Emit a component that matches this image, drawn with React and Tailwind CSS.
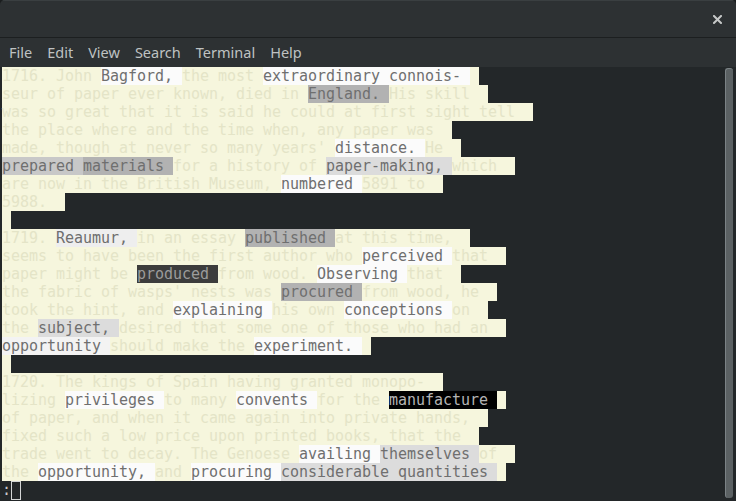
const rows = [
  [["1716. John ", null], ["Bagford, ", "w"], ["the most ", null], ["extraordinary connois- ", "w"]],
  [["seur of paper ever known, died in ", null], ["England. ", "g"], ["His skill", null]],
  [["was so great that it is said he could at first sight tell", null]],
  [["the place where and the time when, any paper was", null]],
  [["made, though at never so many years' ", null], ["distance. ", "w"], ["He", null]],
  [["prepared ", "pg"], ["materials ", "g"], ["for a history of ", null], ["paper-making, ", "lg"], ["which", null]],
  [["are now in the British Museum, ", null], ["numbered ", "w"], ["5891 to", null]],
  [["5988.", null]],
  [],
  [["1719. ", null], ["Reaumur, ", "rw"], ["in an essay ", null], ["published ", "g"], ["at this time,", null]],
  [["seems to have been the first author who ", null], ["perceived ", "w"], ["that", null]],
  [["paper might be ", null], ["produced ", "d"], ["from wood. ", null], ["Observing ", "w"], ["that", null]],
  [["the fabric of wasps' nests was ", null], ["procured ", "g"], ["from wood, he", null]],
  [["took the hint, and ", null], ["explaining ", "w"], ["his own ", null], ["conceptions ", "w"], ["on", null]],
  [["the ", null], ["subject, ", "lg"], ["desired that some one of those who had an", null]],
  [["opportunity ", "ow"], ["should make the ", null], ["experiment. ", "w"]],
  [],
  [["1720. The kings of Spain having granted monopo-", null]],
  [["lizing ", null], ["privileges ", "w"], ["to many ", null], ["convents ", "w"], ["for the ", null], ["manufacture ", "k"]],
  [["of paper, and when it came again into private hands,", null]],
  [["fixed such a low price upon printed books, that the", null]],
  [["trade went to decay. The Genoese ", null], ["availing ", "w"], ["themselves ", "lg"], ["of", null]],
  [["the ", null], ["opportunity, ", "w"], ["and ", null], ["procuring ", "w"], ["considerable quantities ", "lg"]],
]

const styles = {
  w: "bg-[#fbfbfb] text-[#6f6f6f]",
  ow: "bg-[#f3f3f3] text-[#6f6f6f]",
  rw: "bg-[#eeeeee] text-[#6f6f6f]",
  g: "bg-[#b2b2b2] text-[#6f6f6f]",
  pg: "bg-[#c8c8c8] text-[#6f6f6f]",
  lg: "bg-[#dcdcdc] text-[#6f6f6f]",
  d: "bg-[#3c3c3c] text-[#9b9b9b]",
  k: "bg-black text-[#b4b4b4]",
}

// line bg runs two cells past the last printed char
function padRow(segs) {
  if (segs.length === 0) return [[" ", null]]
  const full = segs.map((s) => s[0]).join("")
  const target = full.trimEnd().length + 2
  const extra = target - full.length
  return extra > 0 ? [...segs, [" ".repeat(extra), null]] : segs
}

function TermRow({ segs }) {
  return (
    <div className="h-[18px] leading-[18px] flex">
      <span className="bg-[#f6f6dd] text-[#e4e4c7]">
        {padRow(segs).map(([t, s], i) => (
          <span key={i} className={s ? styles[s] : ""}>
            {t}
          </span>
        ))}
      </span>
    </div>
  )
}

export default function App() {
  const menus = ["File", "Edit", "View", "Search", "Terminal", "Help"]

  return (
    <div className="w-[736px] h-[501px] bg-[#1b1e1f] overflow-hidden">
      <div className="w-full h-full flex flex-col bg-[#232729] rounded-t-[5px] overflow-hidden">
        {/* title bar */}
        <div className="h-[38px] shrink-0 bg-[#2d3133] border-t border-[#3a3f41] border-b border-b-[#1c1f20] flex items-center justify-end pr-[14px]">
          <svg width="9" height="9" viewBox="0 0 9 9">
            <path d="M1 1 L8 8 M8 1 L1 8" stroke="#c6c8c8" strokeWidth="2" strokeLinecap="square" />
          </svg>
        </div>

        {/* menu bar */}
        <div
          className="h-[29px] shrink-0 bg-[#2d3133] flex items-center pl-[9px] gap-[15px] text-[14.5px] text-[#bfc2c2]"
          style={{ fontFamily: "'Noto Sans', 'Open Sans', sans-serif" }}
        >
          {menus.map((m) => (
            <span key={m}>{m}</span>
          ))}
        </div>

        {/* terminal */}
        <div className="flex-1 flex min-h-0">
          <div
            className="flex-1 pl-[2px] text-[15px] tracking-[-0.03px] whitespace-pre"
            style={{ fontFamily: "'DejaVu Sans Mono', 'Liberation Mono', monospace" }}
          >
            {rows.map((segs, i) => (
              <TermRow key={i} segs={segs} />
            ))}
            <div className="h-[18px] leading-[18px] flex items-stretch text-[#c8caca]">
              <span>:</span>
              <span className="w-[10px] h-[19px] border border-[#d4d6d6]"></span>
            </div>
          </div>

          {/* scrollbar */}
          <div className="w-[12px] shrink-0 flex flex-col pt-[1px] pb-[3px] pl-[1px]">
            <div className="w-[8px] flex-1 rounded-[3px] bg-[#5b6163] border-l border-t border-[#7b8285]"></div>
          </div>
        </div>
      </div>
    </div>
  )
}
